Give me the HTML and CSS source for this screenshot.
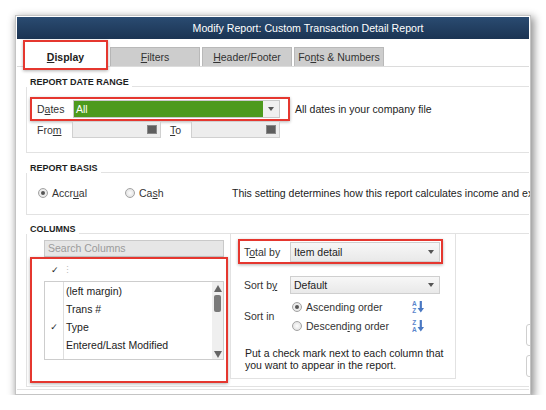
FILE: index.html
```html
<!DOCTYPE html>
<html lang="en">

<head>
    <meta charset="UTF-8">
    <meta name="viewport" content="width=device-width, initial-scale=1.0">
    <title>Modify Report</title>
    <link rel="stylesheet" href="styles.css">
</head>

<body>
    <div class="window">
        <div class="titlebar">Modify Report: Custom Transaction Detail Report</div>

        <div class="tabs">
            <div class="tab tab-active"><u>D</u>isplay</div>
            <div class="tab"><u>F</u>ilters</div>
            <div class="tab"><u>H</u>eader/Footer</div>
            <div class="tab">Fo<u>n</u>ts &amp; Numbers</div>
        </div>

        <div class="content">
            <!-- report date range -->
            <div class="group-head head-range">
                <span class="group-title">REPORT DATE RANGE</span>
                <span class="rule"></span>
            </div>
            <div class="group-body range">
                <div class="dates-row">
                    <div class="mark dates-box">
                        <span class="lbl dates-lbl">D<u>a</u>tes</span>
                        <div class="combo-green">
                            <span class="combo-value">All</span>
                            <span class="combo-drop"><span class="arrow"></span></span>
                        </div>
                    </div>
                    <span class="hint">All dates in your company file</span>
                </div>
                <div class="from-row">
                    <span class="lbl from-lbl">Fro<u>m</u></span>
                    <div class="date-input"><span class="cal"></span></div>
                    <span class="lbl to-lbl"><u>T</u>o</span>
                    <div class="date-input"><span class="cal"></span></div>
                </div>
            </div>

            <!-- report basis -->
            <div class="group-head head-basis">
                <span class="group-title">REPORT BASIS</span>
                <span class="rule"></span>
            </div>
            <div class="group-body basis">
                <label class="radio-item accrual"><span class="radio checked"></span>Accr<u>u</u>al</label>
                <label class="radio-item cash"><span class="radio"></span>Ca<u>s</u>h</label>
                <span class="basis-text">This setting determines how this report calculates income and expenses.</span>
            </div>

            <!-- columns -->
            <div class="group-head head-columns">
                <span class="group-title">COLUMNS</span>
                <span class="rule"></span>
            </div>
            <div class="group-body columns">
                <div class="col-left">
                    <div class="search">Search Columns</div>
                    <div class="mark col-box">
                        <div class="col-head"><span class="tick">✓</span><span class="dots">⋮</span></div>
                        <div class="col-list">
                            <div class="check-col">
                                <div class="check-cell"></div>
                                <div class="check-cell"></div>
                                <div class="check-cell">✓</div>
                                <div class="check-cell"></div>
                            </div>
                            <div class="items">
                                <div class="item">(left margin)</div>
                                <div class="item">Trans #</div>
                                <div class="item">Type</div>
                                <div class="item">Entered/Last Modified</div>
                            </div>
                            <div class="scrollbar">
                                <span class="sb-up"></span>
                                <span class="sb-thumb"></span>
                                <span class="sb-down"></span>
                            </div>
                        </div>
                    </div>
                </div>

                <div class="col-right">
                    <div class="mark total-box">
                        <span class="lbl field-lbl">T<u>o</u>tal by</span>
                        <div class="combo total-combo">
                            <span class="combo-value">Item detail</span>
                            <span class="arrow"></span>
                        </div>
                    </div>

                    <div class="sort-row">
                        <span class="lbl field-lbl">Sort b<u>y</u></span>
                        <div class="combo sort-combo">
                            <span class="combo-value">Default</span>
                            <span class="arrow"></span>
                        </div>
                    </div>

                    <div class="sort-in">
                        <span class="lbl field-lbl">Sort in</span>
                        <div class="sort-opts">
                            <div class="sort-opt">
                                <label class="radio-item"><span class="radio checked"></span>Ascending order</label>
                                <svg class="sort-icon" width="13" height="14" viewBox="0 0 13 14">
                                    <text x="0" y="6" font-size="6.5" font-weight="bold" fill="#5a86cc" font-family="Liberation Sans, sans-serif">A</text>
                                    <text x="0.3" y="13" font-size="6.5" font-weight="bold" fill="#5a86cc" font-family="Liberation Sans, sans-serif">Z</text>
                                    <path d="M8.8 1 V9" stroke="#4a78c2" stroke-width="2.2" fill="none"/>
                                    <path d="M5.6 8 L12 8 L8.8 12.5 Z" fill="#4a78c2"/>
                                </svg>
                            </div>
                            <div class="sort-opt">
                                <label class="radio-item"><span class="radio"></span>Descend<u>i</u>ng order</label>
                                <svg class="sort-icon" width="13" height="14" viewBox="0 0 13 14">
                                    <text x="0.3" y="6" font-size="6.5" font-weight="bold" fill="#5a86cc" font-family="Liberation Sans, sans-serif">Z</text>
                                    <text x="0" y="13" font-size="6.5" font-weight="bold" fill="#5a86cc" font-family="Liberation Sans, sans-serif">A</text>
                                    <path d="M8.8 1 V9" stroke="#4a78c2" stroke-width="2.2" fill="none"/>
                                    <path d="M5.6 8 L12 8 L8.8 12.5 Z" fill="#4a78c2"/>
                                </svg>
                            </div>
                        </div>
                    </div>

                    <p class="col-note">Put a check mark next to each column that you want to appear in the report.</p>
                </div>

                <div class="side-stubs">
                    <span class="stub"></span>
                    <span class="stub"></span>
                </div>
            </div>
        </div>
    </div>
</body>

</html>
```

FILE: styles.css
```css
* {
    box-sizing: border-box;
}

body {
    margin: 0;
    background: #fff;
    font-family: "Liberation Sans", Arial, sans-serif;
    font-size: 10.5px;
    color: #222;
}

.window {
    display: flex;
    flex-direction: column;
    margin: 15px 0 0 15px;
    width: 516px;
    height: 380px;
    border: 1px solid #c4c4c4;
    padding: 1px;
    background: #fff;
    overflow: hidden;
    box-shadow: 2px 3px 8px 1px rgba(0, 0, 0, 0.45);
}

.titlebar {
    flex-shrink: 0;
    height: 22px;
    line-height: 22px;
    padding-left: 70px;
    text-align: center;
    color: #fff;
    font-size: 10.6px;
    background: linear-gradient(#2a4b71, #1b3453);
}

/* tabs */
.tabs {
    flex-shrink: 0;
    display: flex;
    align-items: flex-end;
    height: 28px;
    border-bottom: 1px solid #dcdcdc;
}

.tab {
    width: 90px;
    height: 19px;
    margin-left: 2px;
    border: 1px solid #b9b9b9;
    border-bottom: none;
    background: #cdcdcd;
    color: #333;
    text-align: center;
    line-height: 18px;
}

.tab-active {
    position: relative;
    z-index: 1;
    width: 85px;
    height: 30px;
    margin-left: 6px;
    margin-bottom: -4px;
    padding-top: 4px;
    border: 2px solid #e5372f;
    background: #fff;
    color: #222;
    font-weight: bold;
    line-height: 22px;
    box-shadow: 0 1px 3px rgba(0, 0, 0, 0.3);
}

/* groups */
.content {
    flex-shrink: 0;
    padding: 0 0 2px 9px;
    border-bottom: 1px solid #e2e2e2;
}

.group-head {
    display: flex;
    align-items: flex-end;
    height: 10px;
}

.head-range {
    margin-top: 10px;
}

.head-basis {
    margin-top: 10px;
}

.head-columns {
    margin-top: 9px;
}

.group-title {
    padding: 0 3px 0 4px;
    font-size: 9px;
    line-height: 9px;
    font-weight: bold;
    color: #1e1e1e;
}

.rule {
    flex: 1;
    align-self: stretch;
    border-bottom: 1px solid #e2e2e2;
}

.group-body {
    border-left: 1px solid #e2e2e2;
    border-bottom: 1px solid #e2e2e2;
}

.mark {
    border: 2px solid #e5372f;
    box-shadow: 0 1px 3px rgba(0, 0, 0, 0.3);
}

.lbl {
    color: #333;
}

/* date range */
.range {
    height: 66px;
    padding-top: 10px;
}

.dates-row {
    display: flex;
    align-items: center;
}

.dates-box {
    display: flex;
    align-items: center;
    width: 260px;
    height: 24px;
    margin-left: 3px;
}

.dates-lbl {
    width: 41px;
    padding-left: 5px;
}

.combo-green {
    display: flex;
    width: 207px;
    height: 18px;
    border: 1px solid #c9c9c9;
}

.combo-green .combo-value {
    flex: 1;
    padding-left: 2px;
    background: #4d9a1d;
    color: #fff;
    line-height: 16px;
}

.combo-drop {
    display: flex;
    align-items: center;
    justify-content: center;
    width: 16px;
    background: #f0f0f0;
}

.arrow {
    width: 0;
    height: 0;
    border-left: 3.5px solid transparent;
    border-right: 3.5px solid transparent;
    border-top: 4px solid #555;
}

.hint {
    margin-left: 5px;
}

.from-row {
    display: flex;
    align-items: center;
    height: 17px;
}

.from-lbl {
    width: 35px;
    margin-left: 10px;
}

.to-lbl {
    width: 21px;
    margin-left: 9px;
}

.date-input {
    display: flex;
    align-items: center;
    justify-content: flex-end;
    width: 89px;
    height: 17px;
    padding-right: 3px;
    border: 1px solid #d0d0d0;
    background: #ededed;
}

.cal {
    width: 10px;
    height: 9px;
    border: 1px solid #888;
    background: #5e5e5e;
}

/* basis */
.basis {
    display: flex;
    align-items: center;
    height: 42px;
    padding: 0 0 2px 11px;
    white-space: nowrap;
}

.radio-item {
    display: flex;
    align-items: center;
    flex-shrink: 0;
    color: #333;
}

.radio {
    display: flex;
    align-items: center;
    justify-content: center;
    flex-shrink: 0;
    width: 10px;
    height: 10px;
    margin-right: 4px;
    border: 1px solid #a3a3a3;
    border-radius: 50%;
    background: radial-gradient(#fdfdfd, #dadada);
}

.radio.checked::after {
    content: "";
    width: 4px;
    height: 4px;
    border-radius: 50%;
    background: #555;
}

.accrual {
    width: 87px;
}

.cash {
    width: 107px;
}

.basis-text {
    flex-shrink: 0;
    color: #222;
}

/* columns */
.columns {
    display: flex;
    height: 153px;
}

.col-left {
    width: 203px;
    flex-shrink: 0;
}

.search {
    width: 180px;
    height: 17px;
    margin: 6px 0 0 17px;
    padding-left: 3px;
    border: 1px solid #c9c9c9;
    background: #e6e6e6;
    color: #9b9b9b;
    line-height: 15px;
}

.col-box {
    width: 198px;
    height: 126px;
    margin-left: 3px;
}

.col-head {
    display: flex;
    align-items: center;
    height: 22px;
    padding-left: 19px;
}

.tick,
.check-cell {
    font-family: "DejaVu Sans", sans-serif;
    font-size: 9px;
    color: #222;
}

.dots {
    margin-left: 4px;
    color: #bbb;
    font-size: 9px;
}

.col-list {
    display: flex;
    width: 180px;
    height: 79px;
    margin-left: 12px;
    border: 1px solid #cdcdcd;
}

.check-col {
    width: 19px;
    border-right: 1px solid #dedede;
}

.check-cell {
    height: 18px;
    line-height: 18px;
    text-align: center;
}

.items {
    flex: 1;
    padding-left: 2px;
}

.item {
    height: 18px;
    line-height: 18px;
    color: #222;
}

.scrollbar {
    display: flex;
    flex-direction: column;
    align-items: center;
    width: 11px;
    background: #efefef;
}

.sb-up,
.sb-down {
    width: 0;
    height: 0;
    border-left: 4px solid transparent;
    border-right: 4px solid transparent;
}

.sb-up {
    margin-top: 3px;
    border-bottom: 7px solid #666;
}

.sb-thumb {
    width: 7px;
    height: 17px;
    margin-top: 3px;
    border-radius: 2px;
    background: #7a7a7a;
}

.sb-down {
    margin-top: auto;
    margin-bottom: 1px;
    border-top: 7px solid #666;
}

.col-right {
    width: 226px;
    height: 145px;
    flex-shrink: 0;
    border: 1px solid #e2e2e2;
    border-top: none;
}

.total-box {
    display: flex;
    align-items: center;
    width: 205px;
    height: 25px;
    margin: 5px 0 0 7px;
    padding-left: 4px;
}

.field-lbl {
    width: 46px;
    flex-shrink: 0;
}

.combo {
    display: flex;
    align-items: center;
    width: 150px;
    padding: 0 5px 0 3px;
    border: 1px solid #cfcfcf;
    background: linear-gradient(#f7f7f7, #e9e9e9);
}

.combo .combo-value {
    flex: 1;
    color: #222;
}

.total-combo {
    height: 20px;
}

.sort-row {
    display: flex;
    align-items: center;
    margin: 12px 0 0 13px;
}

.sort-combo {
    height: 18px;
}

.sort-in {
    display: flex;
    align-items: center;
    margin: 3px 0 0 13px;
}

.sort-opts {
    margin-left: 2px;
}

.sort-opt {
    display: flex;
    align-items: center;
    height: 19px;
}

.sort-opt .radio-item {
    width: 120px;
}

.col-note {
    margin: 12px 0 0 14px;
    width: 205px;
    line-height: 12px;
    color: #222;
}

.side-stubs {
    display: flex;
    flex-direction: column;
    gap: 9px;
    width: 3px;
    margin: 90px 0 0 auto;
}

.stub {
    width: 8px;
    height: 22px;
    border: 1px solid #cfcfcf;
    border-radius: 3px;
}
```
